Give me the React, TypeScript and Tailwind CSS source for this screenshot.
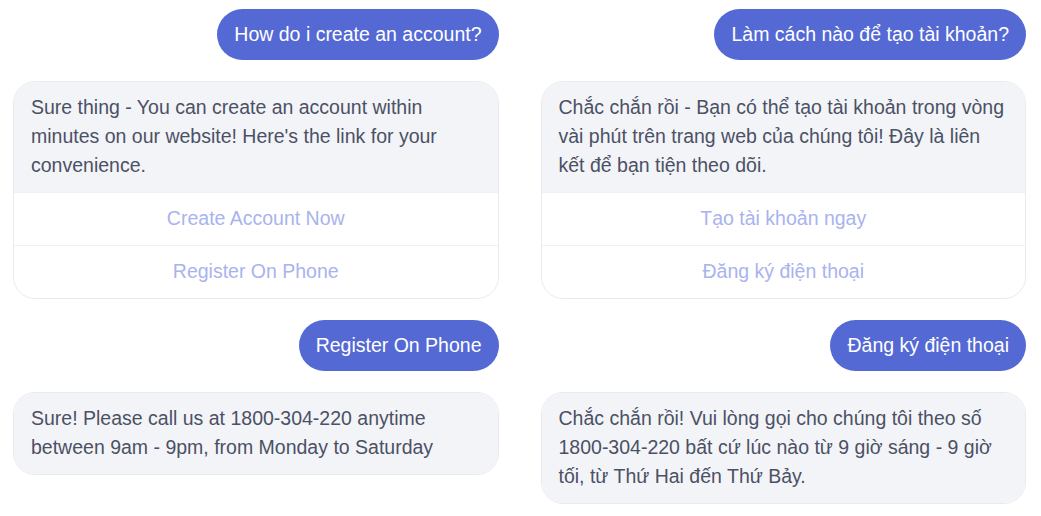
import type { ReactNode } from 'react';

type Turn = {
  question: string;
  answer: ReactNode;
  actions?: string[];
};

const COLUMNS: Turn[][] = [
  [
    {
      question: 'How do i create an account?',
      answer: "Sure thing - You can create an account within minutes on our website! Here's the link for your convenience.",
      actions: ['Create Account Now', 'Register On Phone'],
    },
    {
      question: 'Register On Phone',
      answer: 'Sure! Please call us at 1800-304-220 anytime between 9am - 9pm, from Monday to Saturday',
    },
  ],
  [
    {
      question: 'Làm cách nào để tạo tài khoản?',
      answer: 'Chắc chắn rồi - Bạn có thể tạo tài khoản trong vòng vài phút trên trang web của chúng tôi! Đây là liên kết để bạn tiện theo dõi.',
      actions: ['Tạo tài khoản ngay', 'Đăng ký điện thoại'],
    },
    {
      question: 'Đăng ký điện thoại',
      answer: 'Chắc chắn rồi! Vui lòng gọi cho chúng tôi theo số 1800-304-220 bất cứ lúc nào từ 9 giờ sáng - 9 giờ tối, từ Thứ Hai đến Thứ Bảy.',
    },
  ],
];

function UserBubble({ children }: { children: ReactNode }) {
  return (
    <div className="flex justify-end">
      <div className="h-[51px] px-[17px] flex items-center rounded-full bg-[#5469d4] text-white text-[19.5px]">
        {children}
      </div>
    </div>
  );
}

function BotBubble({ text, actions }: { text: ReactNode; actions?: string[] }) {
  return (
    <div className="rounded-[22px] border border-[#e9ebf0] overflow-hidden bg-white">
      <div className="bg-[#f3f4f8] px-[17px] pt-[11px] pb-[12px] text-[19.5px] leading-[29px] text-[#4b5165]">
        {text}
      </div>
      {actions?.map((a) => (
        <div
          key={a}
          className="h-[53px] flex items-center justify-center border-t border-[#eef0f4] text-[19.5px] text-[#a9b3ee]"
        >
          {a}
        </div>
      ))}
    </div>
  );
}

export default function App() {
  return (
    <div
      className="min-h-screen bg-white pl-[13px] pr-[15px] pt-[9px] grid grid-cols-2 gap-x-[42px] items-start"
      style={{ fontFamily: "'Liberation Sans', Arial, sans-serif" }}
    >
      {COLUMNS.map((turns, ci) => (
        <div key={ci} className="flex flex-col gap-[21px]">
          {turns.map((t) => (
            <div key={t.question} className="flex flex-col gap-[21px]">
              <UserBubble>{t.question}</UserBubble>
              <BotBubble text={t.answer} actions={t.actions} />
            </div>
          ))}
        </div>
      ))}
    </div>
  );
}
